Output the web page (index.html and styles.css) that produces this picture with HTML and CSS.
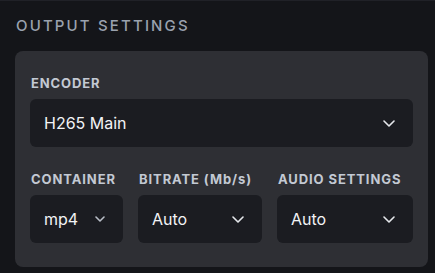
FILE: index.html
```html
<!DOCTYPE html>
<html lang="en">
<head>
    <meta charset="UTF-8">
    <title>Output Settings</title>
    <link rel="stylesheet" href="styles.css">
</head>
<body>
    <section class="panel">
        <h2 class="panel-title">OUTPUT SETTINGS</h2>

        <div class="card">
            <div class="field">
                <label>ENCODER</label>
                <div class="select">
                    <span>H265 Main</span>
                    <svg class="chevron" width="12" height="7" viewBox="0 0 12 7"><polyline points="1,1 6,6 11,1"/></svg>
                </div>
            </div>

            <div class="row">
                <div class="field">
                    <label>CONTAINER</label>
                    <div class="select">
                        <span>mp4</span>
                        <svg class="chevron small" width="10" height="6" viewBox="0 0 10 6"><polyline points="1,1 5,5 9,1"/></svg>
                    </div>
                </div>
                <div class="field">
                    <label>BITRATE (Mb/s)</label>
                    <div class="select">
                        <span>Auto</span>
                        <svg class="chevron" width="12" height="7" viewBox="0 0 12 7"><polyline points="1,1 6,6 11,1"/></svg>
                    </div>
                </div>
                <div class="field">
                    <label>AUDIO SETTINGS</label>
                    <div class="select">
                        <span>Auto</span>
                        <svg class="chevron" width="12" height="7" viewBox="0 0 12 7"><polyline points="1,1 6,6 11,1"/></svg>
                    </div>
                </div>
            </div>
        </div>
    </section>
</body>
</html>
```

FILE: styles.css
```css
* {
    margin: 0;
    padding: 0;
    box-sizing: border-box;
}

body {
    font-family: Inter, 'Noto Sans', sans-serif;
    background: #141519;
    color: #f2f3f5;
    border-top: 1px solid #202127;
    height: 273px;
    overflow: hidden;
}

.panel {
    padding: 16px 7px 0 15px;
}

.panel-title {
    font-size: 15px;
    line-height: 18px;
    font-weight: 500;
    letter-spacing: 2.15px;
    color: #9aa2ae;
    margin-left: 1px;
    margin-bottom: 16px;
}

.card {
    background: #2e2f34;
    border-radius: 8px;
    padding: 24px 15px;
}

.row {
    display: grid;
    grid-template-columns: 93px 124px 1fr;
    column-gap: 15px;
    margin-top: 24px;
}

.field label {
    display: block;
    font-size: 13px;
    line-height: 16px;
    font-weight: 700;
    letter-spacing: 0.9px;
    color: #c3c9d3;
    margin-left: 1px;
    margin-bottom: 8px;
}

.select {
    height: 48px;
    background: #1b1c21;
    border-radius: 6px;
    padding: 0 18px 0 14px;
    display: flex;
    align-items: center;
    justify-content: space-between;
    font-size: 16px;
}

.chevron {
    fill: none;
    stroke: #e6e8ec;
    stroke-width: 1.6;
    stroke-linecap: round;
    stroke-linejoin: round;
}

.chevron.small {
    stroke: #b9bec7;
}
```
